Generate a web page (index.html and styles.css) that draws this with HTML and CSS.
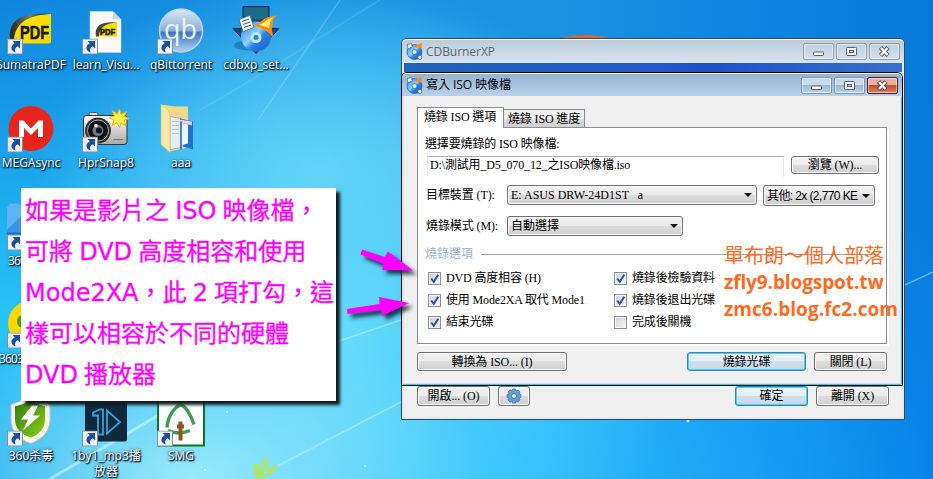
FILE: index.html
```html
<!DOCTYPE html>
<html lang="zh-Hant">
<head>
<meta charset="utf-8">
<title>CDBurnerXP</title>
<link rel="stylesheet" href="styles.css">
</head>
<body>
<svg width="0" height="0" class="defs">
  <defs>
    <linearGradient id="gy" x1="0" y1="0" x2="1" y2="1"><stop offset="0" stop-color="#ffe500"/><stop offset="1" stop-color="#f2d800"/></linearGradient>
    <linearGradient id="gk" x1="0" y1="0" x2="1" y2="0"><stop offset="0" stop-color="#222"/><stop offset=".5" stop-color="#777"/><stop offset="1" stop-color="#111"/></linearGradient>
    <linearGradient id="gq" x1="0" y1="0" x2="0" y2="1"><stop offset="0" stop-color="#dce8f4"/><stop offset=".5" stop-color="#8aaedb"/><stop offset=".55" stop-color="#3f74c0"/><stop offset="1" stop-color="#b5d3f5"/></linearGradient>
    <linearGradient id="gcam" x1="0" y1="0" x2="0" y2="1"><stop offset="0" stop-color="#fff"/><stop offset="1" stop-color="#a8a8a8"/></linearGradient>
    <linearGradient id="gdisc" x1="0" y1="0" x2="1" y2="1"><stop offset="0" stop-color="#2a7fe0"/><stop offset=".45" stop-color="#8fd0ff"/><stop offset=".6" stop-color="#2f7fe0"/><stop offset="1" stop-color="#1c5cc4"/></linearGradient>
    <linearGradient id="gsh" x1="0" y1="0" x2="1" y2="1"><stop offset="0" stop-color="#2f7a10"/><stop offset="1" stop-color="#8fd01c"/></linearGradient>
    <symbol id="shortcut" viewBox="0 0 16 16"><rect x=".5" y=".5" width="15" height="15" fill="#e9f1f6" stroke="#8a8f94"/><path d="M5.500 2.500H13V10L10.800 7.800C8 9 7.500 11 8.500 14 4 12.500 2.500 8 7.800 4.800z" fill="#1f4d9c"/></symbol>
    <symbol id="cd" viewBox="0 0 16 16"><circle cx="8" cy="8.500" r="7" fill="url(#gdisc)" stroke="#1464b4" stroke-width=".7"/><path d="M8 3C11 3 11 0 16 .5 14 1.500 15 3 15 6 13 3 11 6 8 3z" fill="#ff8a1c"/><circle cx="8" cy="8.500" r="2.300" fill="#e9f7ff" stroke="#2878c0" stroke-width=".7"/><path d="M1 1.500l4-1 1 3-4 2z" fill="#fff" stroke="#34608c" stroke-width=".7"/><circle cx="13" cy="13.500" r="2" fill="#e6f2fc" stroke="#34608c" stroke-width=".8"/></symbol>
    <symbol id="check" viewBox="0 0 13 13"><path d="M3.200 6.500l2.600 3.300 4.400-7" fill="none" stroke="#28509c" stroke-width="2"/></symbol>
  </defs>
</svg>
<main class="desktop">
  <svg class="wallpaper" viewBox="0 0 933 479">
    <path d="M340 0L258 120" stroke="#9be4fa" stroke-width="1.500" opacity=".3"/>
    <path d="M200 110C280 65 330 30 380 0" stroke="#9be8ff" stroke-width="2" fill="none" opacity=".16"/>
    <path d="M50 479L210 385" stroke="#d6fbff" stroke-width="3" opacity=".55"/>
    <path d="M260 475L401 402M336 342L401 320M905 285L933 272" stroke="#c5f6ff" stroke-width="1.500" opacity=".45"/>
    <path d="M558 39Q585 31 613 39z" fill="#d66a35"/>
    <path d="M254 463C260 463 266 470 265 479H257C252 474 253 468 254 463zM263 456C269 460 270 468 266 473 262 468 262 460 263 456zM278 466C271 464 267 470 266 477 273 476 274 470 278 466z" fill="#a8e476"/>
    <g fill="#d9fbff" opacity=".7"><circle cx="205" cy="470" r="1.300"/><circle cx="227" cy="412" r="1"/><circle cx="365" cy="466" r="1"/><circle cx="688" cy="421" r="1.600"/></g>
  </svg>

  <div class="item c1 r1"><svg viewBox="0 0 48 48"><path d="M3 33C3 16 12 9 44 8.500V36Q44 38 42 38H14z" fill="url(#gy)"/><path d="M3 34C1 14 15 7 43 8.500 22 10 9 16 7 34z" fill="url(#gk)"/><text class="pdf" x="13" y="33" textLength="29" lengthAdjust="spacingAndGlyphs">PDF</text><use href="#shortcut" x="0" y="33" width="16" height="16"/></svg><span>SumatraPDF</span></div>
  <div class="item c2 r1"><svg viewBox="0 0 48 48"><path d="M8 6H31L39 14V47H8z" fill="#fafafa" stroke="#ccd6dc" stroke-width=".6"/><path d="M31 6V14H39z" fill="#cfd5d8"/><path d="M14 30C13 21 20 17 35 17V31H19z" fill="url(#gy)"/><path d="M14 31C12 20 20 16 35 17 23 18 17 22 17 31z" fill="#444"/><text class="pdf small" x="18" y="29" textLength="15" lengthAdjust="spacingAndGlyphs">PDF</text><use href="#shortcut" x="0" y="33" width="16" height="16"/></svg><span>learn_Visu...</span></div>
  <div class="item c3 r1"><svg viewBox="0 0 48 48"><circle cx="24" cy="25" r="21.500" fill="url(#gq)" stroke="#b9d4ee" stroke-width="1.500"/><text class="qb" x="7" y="33" textLength="33" lengthAdjust="spacingAndGlyphs">qb</text><use href="#shortcut" x="0" y="33" width="16" height="16"/></svg><span>qBittorrent</span></div>
  <div class="item c4 r1"><svg viewBox="0 0 48 48"><ellipse cx="16" cy="40" rx="14" ry="5" fill="#0b5f9c" opacity=".5"/><path d="M11 1H37V23H47L24 48 1 23H11z" fill="#154a80" stroke="#0b2f5c"/><path d="M12 2H36V14H12z" fill="#1c6a84"/><circle cx="24" cy="31" r="15" fill="url(#gdisc)"/><path d="M21 19C30 19 29 11 45 10 39 14 42 18 40 23L41 33C37 25 32 25 21 19z" fill="#ff8b17"/><path d="M27 19C33 18 33 14 41 12 37 16 38 19 37 23 33 20 30 21 27 19z" fill="#fff06a"/><circle cx="24" cy="32" r="5.500" fill="#bfe6fb"/><circle cx="24" cy="32" r="2.500" fill="#2c86cf"/><path d="M7 14L18 10 22 22 11 26z" fill="#fff" stroke="#39648f" stroke-width=".8"/><path d="M10 16l7-2.500M11 19l7-2.500M12 22l7-2.500" stroke="#33689c" stroke-width="1.200"/></svg><span>cdbxp_set...</span></div>

  <div class="item c1 r2"><svg viewBox="0 0 48 48"><circle cx="24" cy="25" r="22.500" fill="#e8251d"/><path d="M12 33.500V17H16.500L24 25 31.500 17H36V33.500H31V24.500L24 31.500 17 24.500V33.500z" fill="#fff"/><use href="#shortcut" x="0" y="33" width="16" height="16"/></svg><span>MEGAsync</span></div>
  <div class="item c2 r2"><svg viewBox="0 0 48 48"><rect x="7" y="9" width="9" height="5" rx="1.500" fill="#e6e6e6" stroke="#555"/><rect x="1.500" y="12" width="43.500" height="29" rx="3" fill="url(#gcam)" stroke="#333"/><circle cx="16" cy="27" r="13" fill="#333"/><circle cx="16" cy="27" r="10.500" fill="#111" stroke="#aaa"/><circle cx="16" cy="27" r="5.500" fill="#69788a"/><circle cx="17" cy="27" r="3" fill="#111"/><circle cx="14" cy="22" r="1.800" fill="#fff"/><path d="M31 36h10" stroke="#777"/><path d="M37.500 5.500L39 11 44.500 8 42 13 47 15 42 17 44 22 39 19.500 37.500 24 35 19 30 22 32 17 27 14 32.500 12.500 30 7 35.500 10.500z" fill="#fff04a" stroke="#f0b400"/><use href="#shortcut" x="0" y="33" width="16" height="16"/></svg><span>HprSnap8</span></div>
  <div class="item c3 r2"><svg viewBox="0 0 48 48"><path d="M4 1L18 3V3H31V44L13 48 4 41z" fill="#eed98b"/><path d="M13 13L24 15V44L13 46z" fill="#e4edf1" stroke="#6d94ad" stroke-width=".6"/><path d="M15 18h7M15 22h7M15 26h7M15 30h7" stroke="#b5bfc8"/><path d="M23 15L36 18V46L26 43z" fill="#1d74cf"/><path d="M24 19L31 21V40L24 42z" fill="#eaf4fa"/><path d="M23 16L35 18V22L23 19z" fill="#e9c9f5"/><path d="M24 18V46" stroke="#1d65ba" stroke-width="1.500"/><path d="M4 1C8 3 13 8 13 12V49L4 41z" fill="#f7e8a9" stroke="#d8bf67" stroke-width=".6"/></svg><span>aaa</span></div>

  <div class="item c1 r3"><svg viewBox="0 0 48 48"><path d="M0 6L3 2H11L15 5V31H0z" fill="#5cb4f2"/><path d="M0 28L15 14V31H0z" fill="#3f94e2"/><path d="M0 31H15V33H0z" fill="#1e69bc"/><use href="#shortcut" x="0" y="33" width="16" height="16"/></svg><span class="partial">36</span></div>
  <div class="item c1 r4"><svg viewBox="0 0 48 48"><circle cx="24" cy="24" r="23" fill="#f7d800"/><circle cx="17" cy="22" r="7" fill="#4c9e14"/><use href="#shortcut" x="0" y="33" width="16" height="16"/></svg><span class="partial long">3603</span></div>

  <div class="item c1 r5"><svg viewBox="0 0 48 48"><path d="M4 7L24 0 43 7V22C43 35 34 42 24 46 11 42 4 33 4 22z" fill="#f5f5ec" stroke="#bcc6b9"/><path d="M8 9L24 4 38 9V22C38 31 32 37 24 40 14 37 8 31 8 22z" fill="url(#gsh)"/><path d="M25 8L14 22H21L16 33 33 18H26L31 8z" fill="#fff"/><use href="#shortcut" x="0" y="33" width="16" height="16"/></svg><span>360杀毒</span></div>
  <div class="item c2 r5"><svg viewBox="0 0 48 48"><rect x="3" y="3" width="42" height="41" rx="2" fill="#10293c"/><path d="M11 15L18 12H21V37H16V18H11zM25 13V36L38 24.500z" fill="none" stroke="#36a3d6" stroke-width="1.800"/><use href="#shortcut" x="0" y="33" width="16" height="16"/></svg><span>1by1_mp3播<br>放器</span></div>
  <div class="item c3 r5"><svg viewBox="0 0 48 48"><rect x="1" y="1" width="46" height="47" fill="#fff" stroke="#0b7326" stroke-width="2"/><path d="M24 7C17 10 11 18 10 30M24 7C30 10 34 18 37 27M11 33Q21 38 33 33" fill="none" stroke="#3d9d55" stroke-width="3.500"/><path d="M23.500 24V43M20 29H27" stroke="#8b5420" stroke-width="4"/><use href="#shortcut" x="0" y="33" width="16" height="16"/></svg><span>SMG</span></div>

  <section class="window main-window">
    <header class="titlebar"><svg class="app-icon"><use href="#cd"/></svg><h1>CDBurnerXP</h1>
      <div class="controls">
        <i><svg viewBox="0 0 31 17"><rect x="10.500" y="9" width="10" height="3.500" rx=".8" fill="#fff" stroke="#53606c"/></svg></i>
        <i><svg viewBox="0 0 31 17"><rect x="10.500" y="4.500" width="10" height="8" rx=".8" fill="#f5f8fa" stroke="#53606c"/><rect x="13.500" y="7.500" width="4" height="2" fill="#b8c8d6" stroke="#53606c"/></svg></i>
        <i><svg viewBox="0 0 31 17"><path d="M11.500 4.500l7.500 8M19 4.500l-7.500 8" stroke="#53606c" stroke-width="4.400"/><path d="M12 5l6.500 7M18.500 5l-6.500 7" stroke="#fff" stroke-width="2.400"/></svg></i>
      </div>
    </header>
    <div class="banner"></div>
    <footer class="main-actions">
      <button class="w73">開啟... (O)</button>
      <button class="gear"><svg viewBox="0 0 16 16"><path d="M6.500 1h3l.5 2 2-1 2 2-1 2 2 .5v3l-2 .5 1 2-2 2-2-1-.5 2h-3L6 13l-2 1-2-2 1-2-2-.5v-3L3 6 2 4l2-2 2 1z" fill="#659fd2" stroke="#3f78b0" stroke-width=".8"/><circle cx="8" cy="8" r="2.500" fill="#e8f1f8" stroke="#3f78b0"/></svg></button>
      <span class="grow"></span>
      <button class="w73 primary">確定</button>
      <button class="w73">離開 (X)</button>
    </footer>
  </section>

  <section class="window dialog">
    <header class="titlebar"><svg class="app-icon"><use href="#cd"/></svg><h1>寫入 ISO 映像檔</h1>
      <div class="controls">
        <i><svg viewBox="0 0 31 17"><rect x="10.500" y="9" width="10" height="3.500" rx=".8" fill="#fff" stroke="#53606c"/></svg></i>
        <i><svg viewBox="0 0 31 17"><rect x="10.500" y="4.500" width="10" height="8" rx=".8" fill="#f5f8fa" stroke="#53606c"/><rect x="13.500" y="7.500" width="4" height="2" fill="#b8c8d6" stroke="#53606c"/></svg></i>
        <i class="close"><svg viewBox="0 0 31 17"><path d="M11.500 4.500l7.500 8M19 4.500l-7.500 8" stroke="#53505c" stroke-width="4.400"/><path d="M12 5l6.500 7M18.500 5l-6.500 7" stroke="#fff" stroke-width="2.400"/></svg></i>
      </div>
    </header>
    <div class="client">
      <nav class="tabs"><span class="tab active">燒錄 ISO 選項</span><span class="tab">燒錄 ISO 進度</span></nav>
      <div class="pane">
        <p class="path-label">選擇要燒錄的 ISO 映像檔:</p>
        <div class="path-row"><span class="path">D:\測試用_D5_070_12_之ISO映像檔.iso</span><button>瀏覽 (W)...</button></div>
        <div class="field"><label>目標裝置 (T):</label><span class="combo device"><b>E: ASUS DRW-24D1ST &nbsp; a</b></span><span class="combo speed"><b>其他: 2x (2,770 KE</b></span></div>
        <div class="field mode"><label>燒錄模式 (M):</label><span class="combo auto"><b>自動選擇</b></span></div>
        <h2>燒錄選項</h2>
        <div class="options">
          <label><i><svg><use href="#check"/></svg></i>DVD 高度相容 (H)</label><label><i><svg><use href="#check"/></svg></i>燒錄後檢驗資料</label>
          <label><i><svg><use href="#check"/></svg></i>使用 Mode2XA 取代 Mode1</label><label><i><svg><use href="#check"/></svg></i>燒錄後退出光碟</label>
          <label><i><svg><use href="#check"/></svg></i>結束光碟</label><label><i class="off"></i>完成後關機</label>
        </div>
      </div>
      <footer class="dialog-actions"><button class="convert">轉換為 ISO... (I)</button><span class="grow"></span><button class="burn primary">燒錄光碟</button><button class="w73">關閉 (L)</button></footer>
    </div>
  </section>

  <aside class="watermark"><p>單布朗～個人部落</p><p class="latin l1">zfly9.blogspot.tw</p><p class="latin l2">zmc6.blog.fc2.com</p></aside>
  <aside class="note">如果是影片之 ISO 映像檔，<br>可將 DVD 高度相容和使用<br>Mode2XA，此 2 項打勾，這<br>樣可以相容於不同的硬體<br>DVD 播放器</aside>
  <svg class="pointers" viewBox="340 240 80 85"><path d="M362 249.500L384.500 257 388 251.500 413 270.500 382 270 383.500 264 360.500 254.500zM347 309L379.500 304 379 297 409 303 382 316 381 310 347.500 314z" fill="#f0f"/></svg>
</main>
</body>
</html>
```
FILE: styles.css
```css
* { box-sizing: border-box; }
body { margin: 0; overflow: hidden; }
p, h1, h2 { margin: 0; font-weight: normal; }
.defs { position: absolute; }

.desktop {
  position: relative;
  width: 933px;
  height: 479px;
  overflow: hidden;
  font: 12px/16px "Liberation Serif", "Noto Sans CJK TC", serif;
  background:
    radial-gradient(ellipse 300px 170px at 190px 479px, rgba(165, 240, 250, .9), rgba(120, 230, 250, 0)),
    radial-gradient(ellipse 290px 190px at 320px 170px, rgba(105, 215, 248, .85), rgba(70, 190, 245, 0)),
    radial-gradient(ellipse 330px 330px at 350px 330px, rgba(105, 222, 250, .95), rgba(80, 210, 250, .75) 40%, rgba(40, 170, 240, 0)),
    radial-gradient(ellipse 400px 370px at 0 320px, rgba(42, 200, 248, .95), rgba(30, 175, 240, .65) 50%, rgba(30, 170, 240, 0)),
    radial-gradient(ellipse 450px 300px at 480px 479px, rgba(50, 195, 255, .9), rgba(20, 160, 250, 0)),
    linear-gradient(rgba(0, 145, 255, 0) 20%, rgba(8, 148, 255, .45)),
    linear-gradient(90deg, #0c7cd8, #1a94e2 30%, #1c92e2 60%, #0c82e0 85%, #0878d8);
}
.wallpaper { position: absolute; inset: 0; width: 100%; height: 100%; }

/* Desktop shortcuts */
.item {
  position: absolute;
  width: 84px;
  display: flex;
  flex-direction: column;
  align-items: center;
  font: 12px/17px "Open Sans", "Noto Sans CJK TC", sans-serif;
  color: #fff;
  text-align: center;
  white-space: nowrap;
  text-shadow: 1px 1px 2px #001d38, 1px 1px 1px #002040, 0 0 3px rgba(0, 30, 60, .7);
}
.item > svg { width: 48px; height: 49px; margin-bottom: 2px; overflow: visible; }
.item .partial { align-self: flex-start; margin-left: 19px; letter-spacing: -.8px; }
.item .partial.long { margin-left: 10px; }
.c1 { left: -11px; } .c2 { left: 64px; } .c3 { left: 139px; } .c4 { left: 214px; }
.r1 { top: 5px; } .r2 { top: 103px; } .r3 { top: 201px; } .r4 { top: 299px; } .r5 { top: 397px; }
.r5 { line-height: 16px; }
.pdf { font: bold 18px "Liberation Sans", sans-serif; fill: #161616; stroke: #161616; stroke-width: .6; text-shadow: none; }
.pdf.small { font-size: 9px; }
.qb { font: 28px "Open Sans", sans-serif; fill: #eaf5ff; text-shadow: none; }

/* Windows */
.window { position: absolute; display: flex; flex-direction: column; border: 1px solid #3c4650; }
.titlebar { flex: none; display: flex; align-items: center; padding: 0 4px 0 4px; }
.titlebar h1 { flex: 1; margin-left: 3px; font: 12px/16px "Open Sans", "Noto Sans CJK TC", sans-serif; letter-spacing: -.05px; }
.app-icon { width: 17px; height: 17px; }
.controls { display: flex; gap: 2px; }
.controls i { width: 31px; height: 17px; border: 1px solid #8b9bb0; border-radius: 2px; box-shadow: inset 0 0 0 1px rgba(255, 255, 255, .55); }
.controls svg { display: block; width: 31px; height: 17px; margin: -1px; }

.main-window { left: 401px; top: 38px; width: 504px; height: 382px; border-radius: 6px 6px 0 0; background: #f0f0f0; box-shadow: inset 0 0 0 2px #e2ebf5; }
.main-window .titlebar { height: 24px; border-radius: 5px 5px 0 0; border-top: 1px solid #fff; background: linear-gradient(#bccbd9, #d8e4f0); }
.main-window h1 { color: #586872; }
.banner { height: 9px; margin: 0 2px; background: linear-gradient(90deg, #2264b8, #2258c8 50%, #1d52c8 62%, #3870cc); }
.main-actions { display: flex; gap: 8px; margin: 314px 15px 0; }
.grow { flex: 1; }

.dialog { left: 401px; top: 72px; width: 502px; height: 314px; border-color: #000; border-radius: 6px 6px 0 0; background: #b9d1ea; }
.dialog .titlebar { height: 23px; border-top: 1px solid #f5faff; border-radius: 5px 5px 0 0; background: linear-gradient(#98b3d0, #b9d1ea); }
.dialog .controls i { border-color: #7d94b2; background: linear-gradient(#c9daea 48%, #9ab8d4 50%, #bcd3e8); }
.dialog .controls .close { border-color: #541818; background: linear-gradient(#eab09c 45%, #c6482f 50%, #dc8658); }
.client { flex: 1; border: solid #d7e5f2; border-width: 0 1px 1px 2px; background: #f0f0f0; box-shadow: 1px 1px 0 #38c8e8; margin: 0 1px 1px 0; padding: 11px 13px 0 13px; }

.tabs { display: flex; align-items: flex-end; height: 21px; }
.tab { width: 81px; height: 19px; padding-left: 4px; line-height: 18px; letter-spacing: -.15px; border: 1px solid #898c95; border-left: 0; background: linear-gradient(#f2f2f2 50%, #dcdcdc 52%, #d0d0d0); white-space: nowrap; }
.tab.active { width: 87px; height: 21px; padding-left: 6px; line-height: 19px; border-left: 1px solid #898c95; border-bottom: 0; background: #fff; position: relative; z-index: 1; }
.pane { position: relative; z-index: 0; height: 217px; margin-top: -1px; border: 1px solid #898c95; background: #fff; padding: 8px 7px 0; box-shadow: 2px 2px 0 #fff; }
.path-label { height: 20px; letter-spacing: -.15px; }
.path-row { display: flex; justify-content: space-between; padding-left: 2px; height: 21px; }
.path { width: 357px; height: 21px; padding-left: 2px; line-height: 17px; border: 1px solid #e4e7ec; border-top-color: #abadb3; border-bottom-color: #fff; letter-spacing: -.15px; white-space: nowrap; }
.path-row button { width: 88px; height: 18px; }
.field { display: flex; gap: 6px; margin-top: 8px; height: 21px; }
.field.mode { margin-top: 10px; }
.field label { width: 76px; padding-left: 1px; line-height: 21px; letter-spacing: -.1px; white-space: nowrap; }
.combo { display: flex; align-items: center; justify-content: space-between; height: 20px; padding: 0 4px 0 3px; border: 1px solid #707070; border-radius: 3px; background: linear-gradient(#f2f2f2, #ebebeb 48%, #dddddd 50%, #cfcfcf); box-shadow: inset 0 0 0 1px #fafafa; }
.combo b { font-weight: normal; white-space: nowrap; }
.combo::after { content: ""; flex: none; border: 4px solid transparent; border-top-color: #000; border-bottom: 0; margin-left: 5px; }
.device { width: 250px; }
.speed { width: 112px; height: 21px; }
.speed b { font-family: "Liberation Sans", "Noto Sans CJK TC", sans-serif; letter-spacing: -.6px; }
.auto { width: 176px; }
h2 { display: flex; align-items: center; gap: 8px; height: 18px; margin: 8px 0 0; font-size: 12px; color: #9ab4d0; }
h2::after { content: ""; flex: 1; height: 1px; background: #a0a0a0; }
.options { display: grid; grid-template-columns: 186px 1fr; grid-auto-rows: 22px; margin: 4px 0 0 3px; }
.options label { display: flex; align-items: center; gap: 5px; letter-spacing: -.15px; white-space: nowrap; }
.options i { width: 13px; height: 13px; border: 1px solid #8e8f8f; box-shadow: inset 0 0 0 1px #f4f4f4; background: linear-gradient(135deg, #ccd2d8, #f6f6f6); }
.options svg { display: block; width: 13px; height: 13px; margin: -1px; }

button { display: flex; justify-content: center; align-items: center; height: 20px; padding: 0; border: 1px solid #707070; border-radius: 3px; color: #000; font: inherit; letter-spacing: -.1px; white-space: nowrap; background: linear-gradient(#f2f2f2, #ebebeb 48%, #dddddd 50%, #cfcfcf); box-shadow: inset 0 0 0 1px #fcfcfc; }
.primary { border-color: #3c7fb1; background: linear-gradient(#eef4f8, #e4eef5 48%, #cfe0ec 50%, #c5d9e8); box-shadow: inset 0 0 0 1px #48d0f5; }
.w73 { width: 73px; }
.gear { width: 32px; }
.gear svg { width: 16px; height: 16px; }
.dialog-actions { display: flex; gap: 8px; padding-top: 8px; }
.dialog-actions button { height: 19px; }
.convert { width: 150px; }
.burn { width: 119px; }

/* Annotations */
.watermark { position: absolute; left: 724px; top: 241px; color: #ff6a1e; font: 20px/28px "Noto Sans CJK TC", sans-serif; white-space: nowrap; }
.watermark .latin { font: bold 19px/27px "Open Sans", sans-serif; }
.watermark .l1 { letter-spacing: -.1px; }
.watermark .l2 { letter-spacing: .04px; }
.note { position: absolute; left: 21px; top: 188px; width: 315px; height: 213px; padding: 3px 0 0 4px; background: #fff; box-shadow: 4px 4px 3px #101c20; color: #f0f; font: 24px/41px "DejaVu Sans", "Noto Sans CJK TC", sans-serif; word-spacing: -1.5px; -webkit-text-stroke: .3px #f0f; white-space: nowrap; }
.pointers { position: absolute; left: 340px; top: 240px; width: 80px; height: 85px; overflow: visible; filter: drop-shadow(4px 4px 2px rgba(0, 20, 30, .8)); }
```
